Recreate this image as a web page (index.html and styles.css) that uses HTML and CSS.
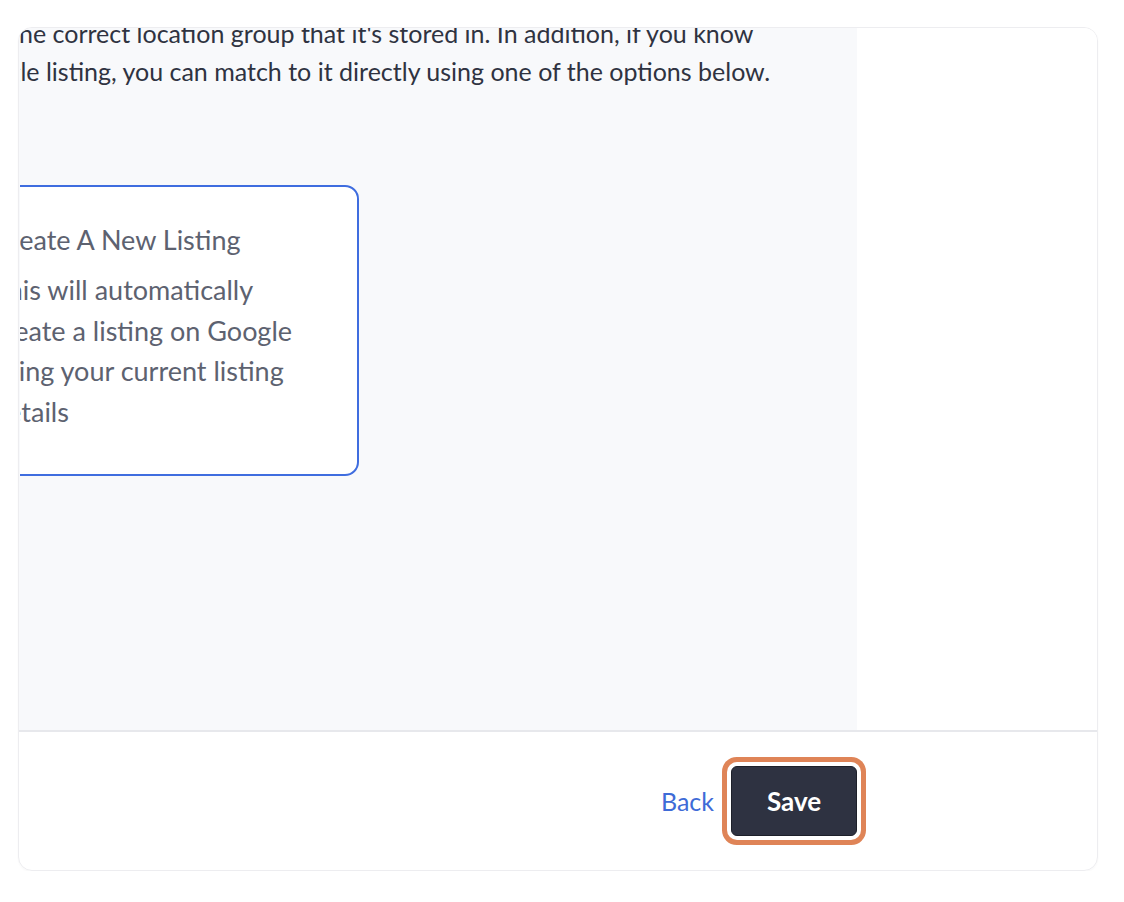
FILE: index.html
```html
<!DOCTYPE html>
<html lang="en">
<head>
    <meta charset="UTF-8">
    <meta name="viewport" content="width=device-width, initial-scale=1.0">
    <title>Match Listing</title>
    <link rel="stylesheet" href="styles.css">
</head>
<body>
    <div class="page">
        <div class="modal">
            <div class="modal-body">
                <div class="panel">
                    <div class="panel-inner">
                        <div class="intro">
                            <span class="line line-1">the correct location group that it's stored in. In addition, if you know</span>
                            <span class="line line-2">Google listing, you can match to it directly using one of the options below.</span>
                        </div>
                        <div class="options">
                            <div class="option selected">
                                <div class="option-text">
                                    <p class="option-title">Create A New Listing</p>
                                    <p class="option-desc">This will automatically<br>create a listing on Google<br>using your current listing<br>details</p>
                                </div>
                            </div>
                        </div>
                    </div>
                </div>
                <div class="aside"></div>
            </div>
            <div class="modal-footer">
                <a class="back-link" href="#">Back</a>
                <button class="save-btn" type="button">Save</button>
            </div>
        </div>
    </div>
</body>
</html>
```

FILE: styles.css
```css
body {
    margin: 0;
    background: #fff;
    font-family: Lato, "Noto Sans", sans-serif;
}

.page {
    padding: 27px 26px 0 18px;
}

.modal {
    height: 844px;
    box-sizing: border-box;
    border: 1px solid #ededf0;
    border-radius: 14px;
    overflow: hidden;
    display: flex;
    flex-direction: column;
    box-shadow: 0 1px 2px rgba(0,0,0,.03);
}

.modal-body {
    height: 702px;
    display: flex;
}

.panel {
    width: 838px;
    background: #f8f9fb;
}

.panel-inner {
    margin-left: 1px;
    height: 100%;
    overflow: hidden;
}

.aside {
    flex: 1;
    background: #fff;
}

.intro {
    margin-top: -14px;
    color: #2f3341;
    font-size: 25px;
    line-height: 38px;
}

.intro .line {
    display: block;
    white-space: nowrap;
}

.line-1 {
    margin-left: -10px;
}

.line-2 {
    margin-left: -59px;
}

.options {
    margin-top: 95px;
    margin-left: -60px;
    display: flex;
}

.option {
    width: 399px;
    height: 291px;
    box-sizing: border-box;
    background: #fff;
    border: 2px solid #3f6ddf;
    border-radius: 14px;
    padding: 35px 0 0 30px;
}

.option-text {
    color: #5d6270;
    font-size: 27px;
    white-space: nowrap;
}

.option-title {
    margin: 0 0 12px;
    line-height: 36px;
}

.option-desc {
    margin: 0;
    line-height: 40.5px;
}

.modal-footer {
    flex: 1;
    border-top: 2px solid #e7e8ec;
    display: flex;
    align-items: center;
    justify-content: flex-end;
    gap: 17px;
    padding-right: 240px;
}

.back-link {
    color: #3e6bd7;
    font-size: 25px;
    text-decoration: none;
}

.save-btn {
    width: 126px;
    height: 70px;
    background: #2e3241;
    color: #fff;
    border: 1px solid #1d202a;
    border-radius: 6px;
    font-family: Lato, sans-serif;
    font-size: 26px;
    font-weight: 700;
    cursor: pointer;
    box-shadow: 0 0 0 4px #fff, 0 0 0 9px #df8457;
}
```
